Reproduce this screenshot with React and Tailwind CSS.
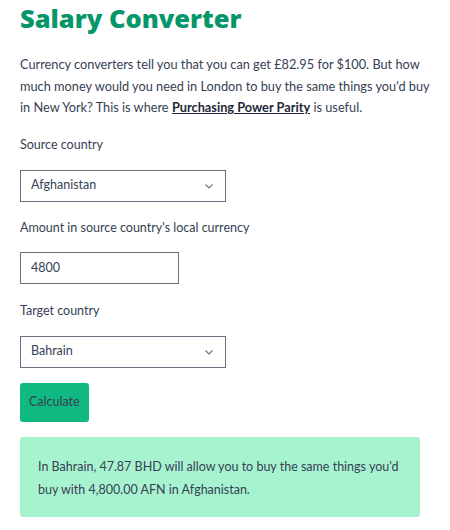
import React, { useState } from "react";

const Chevron = () => (
  <svg width="12" height="12" viewBox="0 0 12 12" fill="none" className="text-gray-500">
    <path d="M2.5 4.5 6 8l3.5-3.5" stroke="currentColor" strokeWidth="1.1" />
  </svg>
);

const Select = ({ value }) => (
  <div className="flex h-[32px] w-[206px] items-center justify-between border border-gray-500 bg-white pl-[10px] pr-[10px] text-[12.5px] text-gray-700">
    <span>{value}</span>
    <Chevron />
  </div>
);

const App = () => {
  const [amount, setAmount] = useState("4800");

  return (
    <div
      className="min-h-[530px] w-[450px] bg-white pl-5 pr-[10px] text-[12.5px] text-gray-700"
      style={{ fontFamily: 'Lato, "Open Sans", sans-serif' }}
    >
      <h1
        className="pt-[1px] text-[25.5px] font-extrabold leading-[34px] text-[#059669]"
        style={{ fontFamily: '"Open Sans", sans-serif' }}
      >
        Salary Converter
      </h1>

      <p className="mt-[19px] w-[418px] text-[12.75px] leading-[21.5px]">
        Currency converters tell you that you can get £82.95 for $100. But how much money would you
        need in London to buy the same things you'd buy in New York? This is where{" "}
        <a href="#" className="font-bold text-gray-800 underline">
          Purchasing Power Parity
        </a>{" "}
        is useful.
      </p>

      <div className="mt-[16px] leading-[20px]">Source country</div>
      <div className="mt-[15px]">
        <Select value="Afghanistan" />
      </div>

      <div className="mt-[16px] leading-[20px]">Amount in source country's local currency</div>
      <input
        value={amount}
        onChange={(e) => setAmount(e.target.value)}
        className="mt-[14px] block h-[32px] w-[159px] border border-gray-500 px-[10px] text-[12.5px] text-gray-700 outline-none"
      />

      <div className="mt-[17px] leading-[20px]">Target country</div>
      <div className="mt-[15px]">
        <Select value="Bahrain" />
      </div>

      <button className="mt-[15px] h-[39px] rounded-[3px] bg-[#10b981] px-[9px] text-[12.5px] text-gray-700">
        Calculate
      </button>

      <div className="mt-[15px] w-[400px] rounded-[3px] bg-[#a7f3d0] px-[18px] pb-[16px] pt-[18px] leading-[23px]">
        In Bahrain, 47.87 BHD will allow you to buy the same things you'd buy with 4,800.00 AFN in
        Afghanistan.
      </div>
    </div>
  );
};

export default App;
